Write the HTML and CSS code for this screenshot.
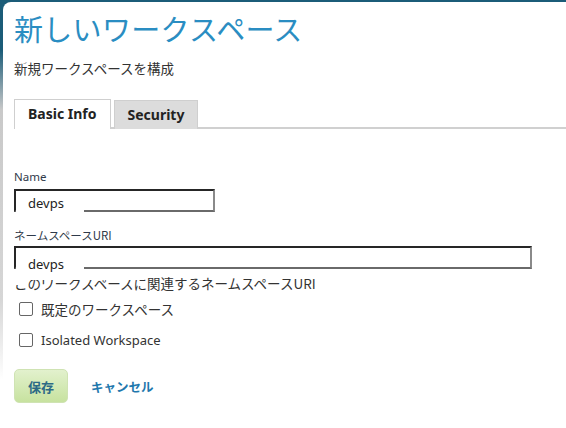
FILE: index.html
```html
<!DOCTYPE html>
<html lang="ja">
<head>
<meta charset="utf-8">
<link rel="stylesheet" href="styles.css">
</head>
<body>
<div class="dialog">
  <h1 class="title">新しいワークスペース</h1>
  <p class="subtitle">新規ワークスペースを構成</p>
  <div class="tabs">
    <div class="tab active">Basic Info</div>
    <div class="tab">Security</div>
  </div>
  <div class="form">
    <label class="label">Name</label>
    <div class="input short"><span class="value">devps</span></div>
    <label class="label uri-label">ネームスペースURI</label>
    <div class="input long"><span class="value low">devps</span></div>
    <p class="help">このワークスペースに関連するネームスペースURI</p>
    <div class="check"><span class="box"></span><span class="cjk">既定のワークスペース</span></div>
    <div class="check"><span class="box"></span><span>Isolated Workspace</span></div>
    <div class="actions">
      <button class="save">保存</button>
      <a class="cancel">キャンセル</a>
    </div>
  </div>
</div>
</body>
</html>
```

FILE: styles.css
```css
html, body { margin: 0; height: 100%; }
body {
  background: linear-gradient(to bottom, #1b5c78 0, #1b5c78 50px, #c9c9c9 110px, #d6d6d6 300px, #ffffff 380px);
  font-family: "Noto Sans", "Noto Sans CJK JP", sans-serif;
  color: #333;
  overflow: hidden;
}
.dialog {
  margin: 2px 0 0 3px;
  background: #fff;
  border-top-left-radius: 8px;
  height: 426px;
  padding: 8px 0 0 11px;
  box-sizing: border-box;
}
.title {
  margin: 0;
  font-family: "Noto Sans CJK JP", sans-serif;
  font-weight: 400;
  font-size: 29px;
  letter-spacing: 0.3px;
  line-height: 36px;
  color: #2a8dc2;
}
.subtitle {
  margin: 13px 0 0;
  font-family: "Noto Sans CJK JP", sans-serif;
  font-size: 13.5px;
  line-height: 18px;
  color: #333;
}
.tabs {
  display: flex;
  gap: 3px;
  margin-top: 22px;
  border-bottom: 2px solid #d0d0d0;
  height: 28px;
  align-items: flex-end;
}
.tab {
  box-sizing: border-box;
  border: 1px solid #cfcfcf;
  border-bottom: none;
  padding: 0 13px;
  font-weight: 700;
  font-size: 14px;
  line-height: 28px;
  color: #222;
  background: #dcdcdc;
  margin-bottom: -2px;
  height: 29px;
}
.tab.active { background: #fff; height: 30px; padding: 0 13px; }
.form { display: flex; flex-direction: column; align-items: flex-start; padding-top: 41px; }
.label {
  font-size: 11.5px;
  line-height: 14px;
  color: #2f3a4a;
  margin-bottom: 5px;
}
.uri-label { font-family: "Noto Sans CJK JP", sans-serif; margin-top: 16px; margin-bottom: 4px; }
.input {
  position: relative;
  box-sizing: border-box;
  height: 23px;
  border-top: 2px solid #262626;
  border-left: 2px solid #262626;
  border-right: 2px solid #8a8a8a;
  border-bottom: 2px solid #6a6a6a;
}
.input.short { width: 201px; }
.input.long { width: 518px; }
.input.long::after {
  content: "";
  position: absolute;
  left: -2px;
  top: 21px;
  width: 130px;
  height: 11px;
  background: #fff;
}
.value {
  position: absolute;
  left: 0;
  top: 4px;
  width: 68px;
  height: 19px;
  background: #fff;
  padding-left: 12px;
  box-sizing: border-box;
  font-size: 13px;
  line-height: 17px;
  color: #222;
}
.value.low { top: 9px; height: 16px; line-height: 14px; z-index: 1; }
.help {
  margin: 6px 0 0;
  font-family: "Noto Sans CJK JP", sans-serif;
  font-size: 13.5px;
  line-height: 16px;
  color: #333;
}
.check {
  display: flex;
  align-items: center;
  gap: 8px;
  margin-left: 5px;
  margin-top: 9px;
  font-size: 13px;
  line-height: 18px;
  color: #333;
}
.check .cjk { font-family: "Noto Sans CJK JP", sans-serif; font-size: 13.5px; }
.check + .check { margin-top: 13px; }
.box {
  width: 12px;
  height: 12px;
  border: 1px solid #666;
  border-radius: 2px;
  background: #fff;
}
.actions {
  display: flex;
  align-items: center;
  gap: 23px;
  margin-top: 20px;
}
.save {
  width: 54px;
  height: 34px;
  border: 1px solid #cfe3b3;
  border-radius: 5px;
  background: linear-gradient(to bottom, #e2f1cd, #c7e29f);
  font-family: "Noto Sans CJK JP", sans-serif;
  font-weight: 700;
  font-size: 13px;
  color: #2d6a86;
  padding: 0;
}
.cancel {
  font-family: "Noto Sans CJK JP", sans-serif;
  font-weight: 700;
  font-size: 12.5px;
  color: #1f78ad;
}
```
